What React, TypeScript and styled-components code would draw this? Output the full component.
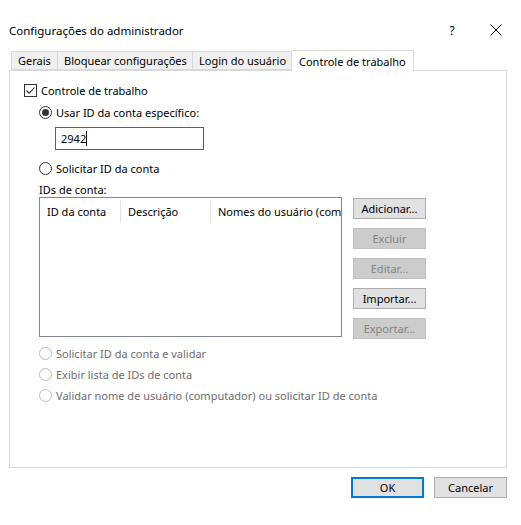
import React from "react";
import styled, { createGlobalStyle } from "styled-components";

const GlobalStyle = createGlobalStyle`
  html, body {
    margin: 0;
    padding: 0;
    background: #fff;
  }
  body {
    font-family: "Segoe UI", "Noto Sans", sans-serif;
    font-size: 11px;
    color: #000;
  }
`;

const Window = styled.div`
  width: 521px;
  height: 525px;
  background: #fff;
  display: flex;
  flex-direction: column;
  box-sizing: border-box;
`;

const TitleBar = styled.div`
  height: 50px;
  padding: 10px 3px 0 9px;
  box-sizing: border-box;
  display: flex;
  align-items: center;
`;

const Title = styled.span`
  flex: 1;
  font-size: 11.5px;
`;

const TitleButton = styled.div`
  width: 44px;
  height: 40px;
  display: flex;
  align-items: center;
  justify-content: center;
  font-size: 12px;
`;

const TabRow = styled.div`
  height: 20px;
  padding-left: 11px;
  display: flex;
  align-items: flex-end;
  position: relative;
  z-index: 1;
`;

const Tab = styled.div<{ $active?: boolean; $width: number }>`
  box-sizing: border-box;
  width: ${(p) => p.$width}px;
  height: ${(p) => (p.$active ? 21 : 19)}px;
  margin-bottom: ${(p) => (p.$active ? -1 : 0)}px;
  padding-left: ${(p) => (p.$active ? 7 : 6)}px;
  border: 1px solid #d9d9d9;
  border-bottom: ${(p) => (p.$active ? "none" : "1px solid #d9d9d9")};
  background: ${(p) => (p.$active ? "#fff" : "#f0f0f0")};
  display: flex;
  align-items: center;
  white-space: nowrap;
  & + & {
    border-left: none;
  }
`;

const Panel = styled.div`
  margin-left: 9px;
  width: 498px;
  height: 398px;
  box-sizing: border-box;
  border: 1px solid #d9d9d9;
  padding-top: 9px;
  display: flex;
  flex-direction: column;
`;

const OptionRow = styled.div<{ $indent: number; $top: number; $disabled?: boolean }>`
  height: 20px;
  margin-top: ${(p) => p.$top}px;
  padding-left: ${(p) => p.$indent}px;
  display: flex;
  align-items: center;
  gap: 4px;
  color: ${(p) => (p.$disabled ? "#6d6d6d" : "#000")};
  white-space: nowrap;
`;

const CheckBox = styled.span`
  width: 13px;
  height: 13px;
  box-sizing: border-box;
  border: 1px solid #333;
  display: flex;
  align-items: center;
  justify-content: center;
  background: #fff;
`;

const Radio = styled.span<{ $checked?: boolean; $disabled?: boolean }>`
  width: 13px;
  height: 13px;
  box-sizing: border-box;
  border-radius: 50%;
  border: 1px solid ${(p) => (p.$disabled ? "#bcbcbc" : "#333")};
  background: #fff;
  display: flex;
  align-items: center;
  justify-content: center;
  &::after {
    content: "";
    display: ${(p) => (p.$checked ? "block" : "none")};
    width: 7px;
    height: 7px;
    border-radius: 50%;
    background: #333;
  }
`;

const TextInput = styled.div`
  margin: 5px 0 0 45px;
  width: 149px;
  height: 23px;
  box-sizing: border-box;
  border: 1px solid #0078d7;
  padding-left: 5px;
  display: flex;
  align-items: center;
`;

const Caret = styled.span`
  width: 1px;
  height: 15px;
  background: #000;
`;

const FieldLabel = styled.div`
  height: 16px;
  margin-top: 3px;
  padding-left: 29px;
  display: flex;
  align-items: center;
`;

const ListArea = styled.div`
  display: flex;
  padding-left: 29px;
`;

const ListBox = styled.div`
  width: 303px;
  height: 140px;
  box-sizing: border-box;
  border: 1px solid #828790;
  overflow: hidden;
`;

const ListHeader = styled.div`
  display: flex;
  height: 25px;
  padding-top: 2px;
  box-sizing: border-box;
`;

const HeaderCell = styled.div<{ $width: number }>`
  width: ${(p) => p.$width}px;
  flex-shrink: 0;
  box-sizing: border-box;
  padding-left: 7px;
  border-right: 1px solid #e5e5e5;
  display: flex;
  align-items: center;
  white-space: nowrap;
  overflow: hidden;
  &:last-child {
    border-right: none;
  }
`;

const ButtonColumn = styled.div`
  margin: 1px 0 0 11px;
  display: flex;
  flex-direction: column;
  gap: 9px;
`;

const Button = styled.button<{ $default?: boolean }>`
  width: 73px;
  height: 21px;
  box-sizing: border-box;
  padding: 0;
  font: inherit;
  color: #000;
  background: #e1e1e1;
  border: ${(p) => (p.$default ? "2px solid #0078d7" : "1px solid #adadad")};
  &:disabled {
    background: #cccccc;
    border-color: #bfbfbf;
    color: #838383;
  }
`;

const Footer = styled.div`
  margin-top: 9px;
  padding-right: 14px;
  display: flex;
  justify-content: flex-end;
  gap: 10px;
`;

const CheckMark = () => (
  <svg width="11" height="11" viewBox="0 0 11 11">
    <path d="M1.5 5.5 L4.2 8.2 L9.5 2.5" fill="none" stroke="#333" strokeWidth="1.1" />
  </svg>
);

const CloseIcon = () => (
  <svg width="12" height="12" viewBox="0 0 12 12">
    <path d="M0.5 0.5 L11.5 11.5 M11.5 0.5 L0.5 11.5" stroke="#000" strokeWidth="1" />
  </svg>
);

const tabs = [
  { label: "Gerais", width: 47 },
  { label: "Bloquear configurações", width: 135 },
  { label: "Login do usuário", width: 99 },
  { label: "Controle de trabalho", width: 122, active: true },
];

const disabledOptions = [
  "Solicitar ID da conta e validar",
  "Exibir lista de IDs de conta",
  "Validar nome de usuário (computador) ou solicitar ID de conta",
];

const App = () => {
  return (
    <Window>
      <GlobalStyle />
      <TitleBar>
        <Title>Configurações do administrador</Title>
        <TitleButton>?</TitleButton>
        <TitleButton>
          <CloseIcon />
        </TitleButton>
      </TitleBar>

      <TabRow>
        {tabs.map((t) => (
          <Tab key={t.label} $active={t.active} $width={t.width}>
            {t.label}
          </Tab>
        ))}
      </TabRow>

      <Panel>
        <OptionRow $indent={14} $top={0}>
          <CheckBox>
            <CheckMark />
          </CheckBox>
          Controle de trabalho
        </OptionRow>
        <OptionRow $indent={29} $top={2}>
          <Radio $checked />
          Usar ID da conta específico:
        </OptionRow>
        <TextInput>
          2942
          <Caret />
        </TextInput>
        <OptionRow $indent={29} $top={8}>
          <Radio />
          Solicitar ID da conta
        </OptionRow>
        <FieldLabel>IDs de conta:</FieldLabel>
        <ListArea>
          <ListBox>
            <ListHeader>
              <HeaderCell $width={81}>ID da conta</HeaderCell>
              <HeaderCell $width={90}>Descrição</HeaderCell>
              <HeaderCell $width={130}>Nomes do usuário (comp</HeaderCell>
            </ListHeader>
          </ListBox>
          <ButtonColumn>
            <Button>Adicionar...</Button>
            <Button disabled>Excluir</Button>
            <Button disabled>Editar...</Button>
            <Button>Importar...</Button>
            <Button disabled>Exportar...</Button>
          </ButtonColumn>
        </ListArea>
        {disabledOptions.map((label, i) => (
          <OptionRow key={label} $indent={29} $top={i === 0 ? 4 : 1} $disabled>
            <Radio $disabled />
            {label}
          </OptionRow>
        ))}
      </Panel>

      <Footer>
        <Button $default>OK</Button>
        <Button>Cancelar</Button>
      </Footer>
    </Window>
  );
};

export default App;
